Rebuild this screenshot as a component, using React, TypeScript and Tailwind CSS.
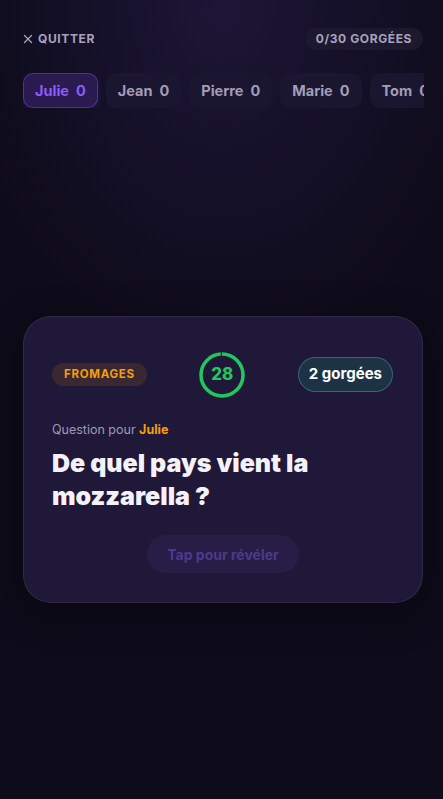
import { X } from 'lucide-react';

const players = [
  { name: 'Julie', score: 0 },
  { name: 'Jean', score: 0 },
  { name: 'Pierre', score: 0 },
  { name: 'Marie', score: 0 },
  { name: 'Tom', score: 0 },
];

const Timer = ({ value, total }: { value: number; total: number }) => {
  const r = 21;
  const c = 2 * Math.PI * r;
  const progress = Math.min(1, value / total + 0.05);
  return (
    <div className="relative w-[48px] h-[48px] flex items-center justify-center">
      <svg width="48" height="48" viewBox="0 0 48 48" className="absolute inset-0 -rotate-90">
        <circle cx="24" cy="24" r={r} fill="none" stroke="#22c55e" strokeOpacity="0.15" strokeWidth="3.5" />
        <circle
          cx="24"
          cy="24"
          r={r}
          fill="none"
          stroke="#22c55e"
          strokeWidth="3.5"
          strokeDasharray={`${c * progress} ${c}`}
        />
      </svg>
      <span className="relative text-[17px] font-extrabold text-[#22c55e]">{value}</span>
    </div>
  );
};

export default function App() {
  return (
    <div
      className="min-h-screen w-full flex flex-col bg-[#0e0b1a] text-white bg-[radial-gradient(ellipse_60%_45%_at_50%_0%,#1d1536_0%,#141027_55%,#0e0b1a_100%)]"
      style={{ fontFamily: 'Inter, "Noto Sans", sans-serif' }}
    >
      {/* header */}
      <div className="flex items-center justify-between pl-[21px] pr-[20px] pt-[28px]">
        <button className="flex items-center gap-[3px] text-[12px] font-bold tracking-[0.05em] text-[#a7a3bf]">
          <X className="w-[14px] h-[14px]" strokeWidth={2.25} />
          QUITTER
        </button>
        <div className="h-[22px] px-[11px] rounded-full bg-[#1c182d] flex items-center text-[12px] font-bold tracking-[0.05em] text-[#a7a3bf]">
          0/30 GORGÉES
        </div>
      </div>

      {/* players */}
      <div className="mt-[23px] ml-[23px] mr-[19px] overflow-hidden">
        <div className="flex gap-[8px] w-max">
          {players.map((p, i) =>
            i === 0 ? (
              <div
                key={p.name}
                className="h-[35px] px-[11px] flex items-center gap-[7px] rounded-[10px] border border-[#7c4ddb]/45 bg-[#2a1a50] shadow-[0_2px_6px_rgba(90,50,180,0.25)] text-[14.5px] font-bold text-[#8b5cf6]"
              >
                <span>{p.name}</span>
                <span>{p.score}</span>
              </div>
            ) : (
              <div
                key={p.name}
                className="h-[35px] px-[12px] flex items-center gap-[7px] rounded-[10px] bg-[#1b1630] text-[14.5px] font-bold text-[#a19db7]"
              >
                <span>{p.name}</span>
                <span>{p.score}</span>
              </div>
            )
          )}
        </div>
      </div>

      {/* card */}
      <div className="flex-1 flex items-center justify-center pl-[23px] pr-[20px] pt-[12px]">
        <div className="w-[400px] rounded-[28px] border border-white/[0.08] bg-[#1f1838] px-[28px] pt-[34px] pb-[29px] shadow-[0_10px_40px_rgba(0,0,0,0.35)]">
          <div className="flex items-center justify-between">
            <div className="h-[23px] px-[12px] rounded-full bg-[#f59e0b]/[0.12] flex items-center text-[11.5px] font-bold tracking-[0.06em] text-[#f59e0b]">
              FROMAGES
            </div>
            <Timer value={28} total={30} />
            <div className="h-[35px] px-[10px] mr-[1px] rounded-full border border-[#3f7184]/80 bg-[#1d3245] flex items-center text-[15px] font-bold text-white">
              2 gorgées
            </div>
          </div>

          <p className="mt-[22px] text-[12.5px] text-[#9e9ab5]">
            Question pour <span className="font-bold text-[#f59e0b]">Julie</span>
          </p>
          <h1 className="mt-[8px] text-[25px] leading-[33px] font-black text-[#f4f2f8]">
            De quel pays vient la
            <br />
            mozzarella ?
          </h1>

          <div className="mt-[22px] flex justify-center">
            <button className="h-[38px] px-[20px] rounded-full bg-[#8b5cf6]/[0.08] text-[14px] font-bold text-[#4d3a8c]">
              Tap pour révéler
            </button>
          </div>
        </div>
      </div>
    </div>
  );
}
